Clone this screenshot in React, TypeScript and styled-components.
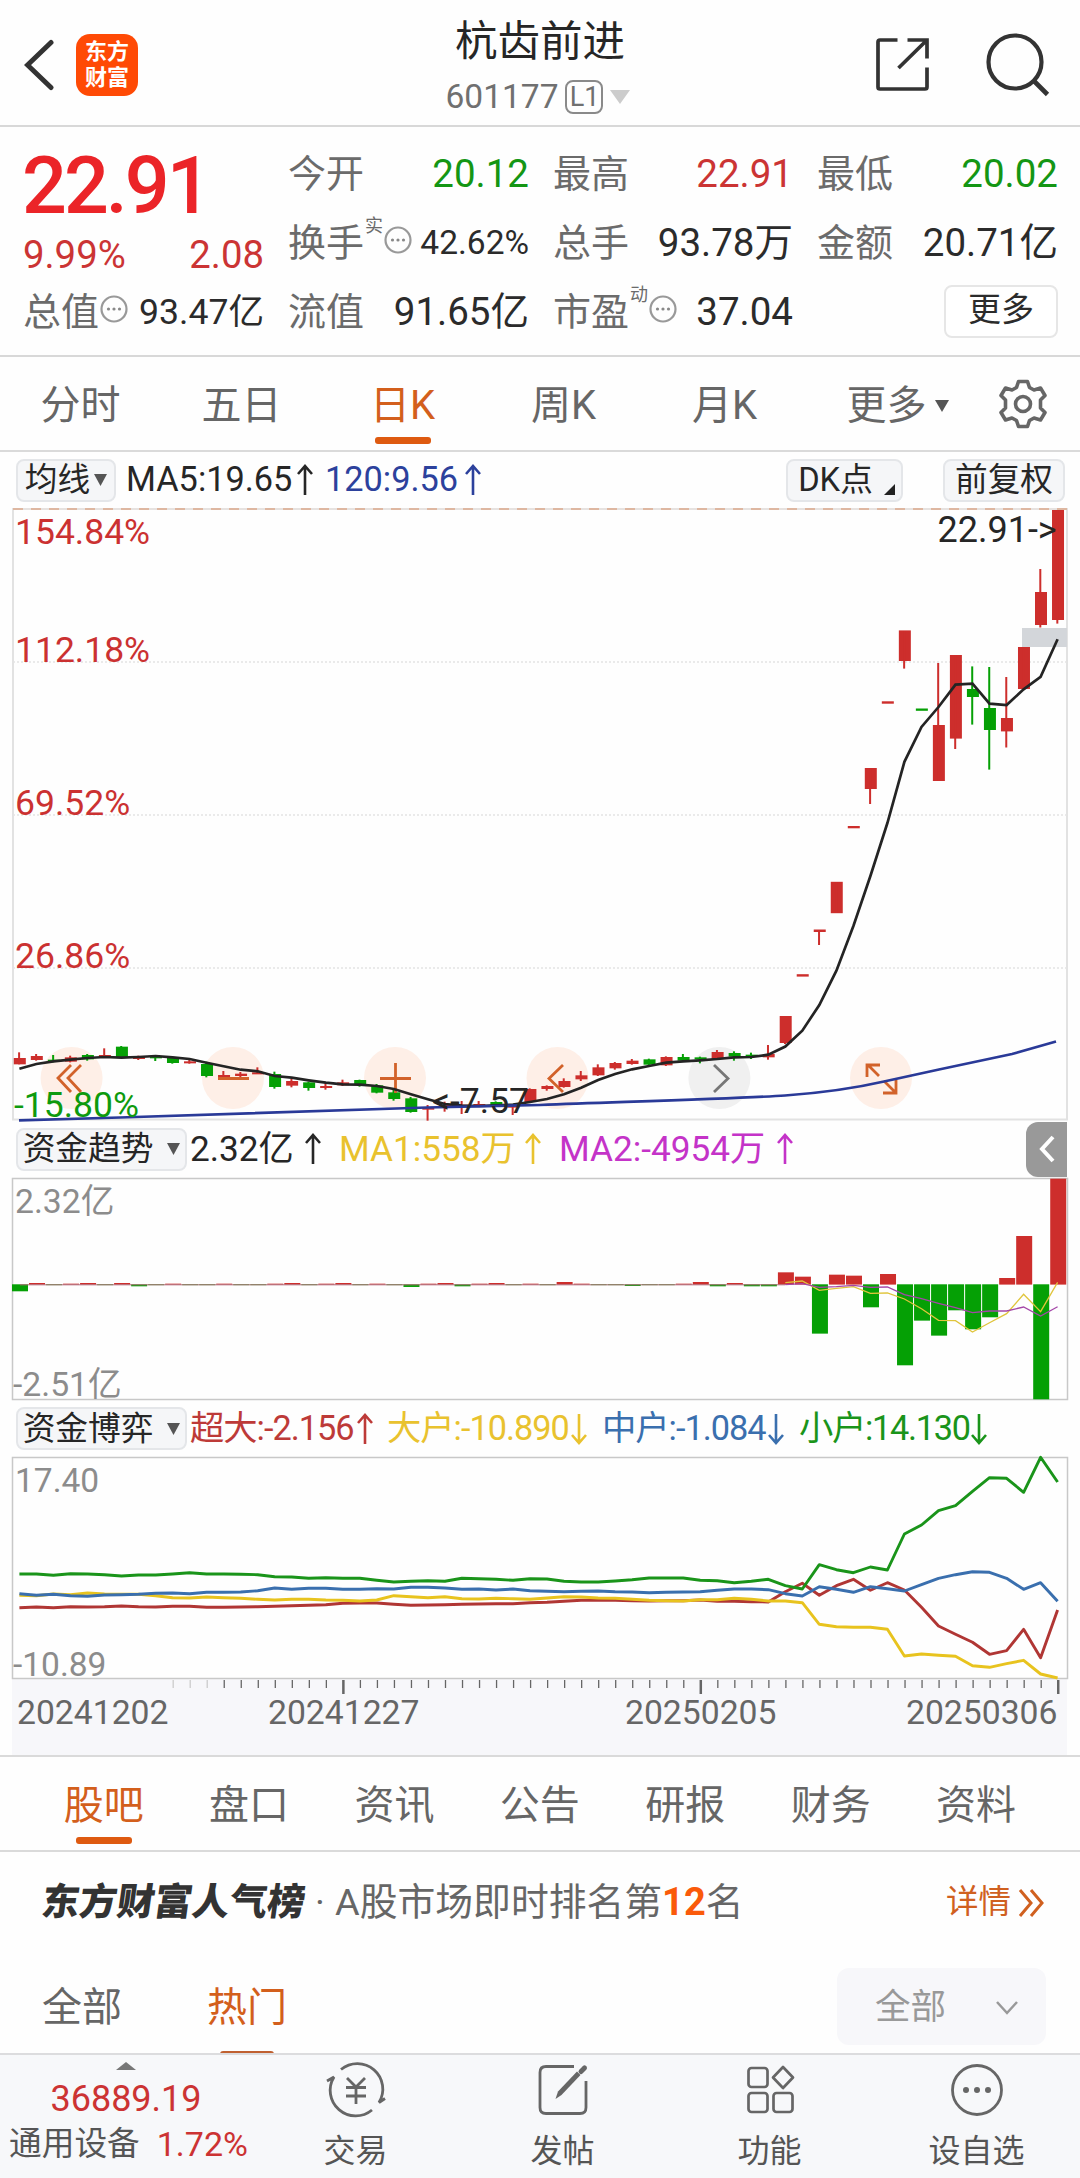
import React from 'react';
import styled, { createGlobalStyle } from 'styled-components';

const Global = createGlobalStyle`
  *{box-sizing:border-box}
  body{margin:0;background:#fff}
`;

const PITCH = 17.02;
const cx = (i: number) => 20 + PITCH * i;

type Candle = [number, number, number, number, number];
const R = 1;
const G = 0;
const low = (v: number) => 1000 + v / 3;
const lowCandles: Candle[] = [
  [R, 174, 193, 157, 193], [R, 168, 180, 162, 182], [G, 179, 182, 165, 187], [R, 172, 185, 167, 187],
  [G, 165, 178, 162, 182], [R, 165, 172, 145, 172], [G, 140, 171, 138, 171], [R, 171, 174, 167, 180],
  [G, 169, 172, 165, 183], [G, 173, 189, 172, 191], [R, 184, 187, 178, 191], [G, 192, 228, 185, 232],
  [R, 225, 229, 213, 235], [R, 221, 228, 216, 234], [R, 217, 221, 202, 222], [G, 222, 261, 215, 266],
  [R, 243, 257, 237, 262], [G, 247, 264, 245, 272], [R, 258, 261, 250, 269], [R, 247, 256, 239, 258],
  [G, 240, 255, 239, 260], [G, 256, 278, 252, 280], [G, 277, 297, 270, 302], [G, 295, 336, 291, 338],
  [R, 323, 326, 315, 362], [R, 315, 321, 305, 335], [R, 314, 320, 303, 342], [R, 312, 315, 303, 318],
  [G, 306, 318, 304, 320], [R, 317, 320, 314, 345], [R, 267, 306, 265, 308], [R, 258, 267, 256, 272],
  [R, 243, 261, 235, 263], [R, 226, 238, 213, 243], [R, 202, 226, 193, 228], [R, 189, 205, 186, 209],
  [R, 182, 192, 177, 194], [G, 178, 194, 176, 198], [R, 171, 196, 169, 198], [G, 171, 182, 162, 186],
  [G, 172, 178, 170, 190], [R, 156, 177, 150, 180], [G, 159, 170, 154, 182], [G, 164, 167, 158, 177],
  [R, 162, 172, 135, 179],
].map(([c, a, b, h, l]) => [c, low(a), low(b), low(h), low(l)] as Candle);
const candles: Candle[] = [
  ...lowCandles,
  [R, 1016, 1043, 1016, 1044], [R, 974.2, 976.6, 975, 976], [R, 929.5, 932, 930, 945],
  [R, 881.8, 913.2, 882, 913], [R, 826, 828.3, 827, 828], [R, 768, 789, 768, 804],
  [R, 701.3, 703.7, 702, 703], [R, 630.4, 661, 631, 668.6], [G, 708.5, 710.8, 709, 710],
  [R, 725, 781, 663, 781], [R, 655, 738.6, 655, 749], [G, 689, 697, 666.4, 724.6],
  [G, 708, 730, 667, 769.6], [R, 718, 731.4, 677, 747.5], [R, 647, 689, 647, 689],
  [R, 592, 625, 569, 627.5], [R, 510, 620, 510, 623.6],
];
const ma5 = [
  ...[206, 192, 184, 179, 174, 171, 173, 171, 168, 172, 177, 188, 199, 209, 214, 228, 233, 241, 248, 253, 254, 258,
    267, 283, 298, 312, 317, 318, 316, 314, 306, 297, 283, 263, 240, 222, 208, 198, 188, 184, 181, 177, 172, 171,
    164].map(low),
  1046.5, 1030.7, 1005, 970.7, 926, 876, 823, 761.8, 727, 707, 684.6, 683.6, 703.6, 705, 689.3, 676.8, 639.3,
];

const flow = (v: number) => 1170 + v / 3;
const flowSmall: Record<number, number> = {
  0: 363, 1: 339, 4: 339, 6: 339, 7: 348, 16: 339, 19: 339, 23: 350, 25: 339, 26: 348, 28: 339, 32: 336, 36: 347, 40: 336,
  41: 348, 42: 339, 43: 348, 44: 348,
};
const flowTail = [307, 320, 490, 314, 317, 411, 312, 585, 451, 496, 420, 477, 441, 324, 198, 687, 26];
const flowBars = Array.from({ length: 62 }, (_, i) => (i >= 45 ? flowTail[i - 45] : flowSmall[i] ?? (i % 3 ? 344.5 : 341)));
const flowYellow = [338, 333, 361, 355, 350, 370, 369, 387, 416, 451, 452, 486, 458, 431, 373, 425, 337];
const flowMagenta = [344, 341, 352, 350, 346, 352, 351, 374, 386, 400, 413, 428, 423, 423, 411, 438, 410];

const game = {
  green: [402, 402, 406, 401, 402, 404, 408, 405, 405, 402, 398, 402, 402, 403, 404, 410, 411, 415, 413, 415, 415, 421,
    426, 424, 422, 424, 415, 416, 418, 421, 416, 417, 424, 426, 426, 423, 419, 414, 414, 414, 421, 422, 428, 424, 418,
    437, 447, 374, 389, 398, 381, 390, 282, 255, 212, 197, 154, 113, 115, 157, 52, 126],
  blue: [461, 466, 463, 467, 469, 465, 464, 463, 460, 459, 461, 457, 457, 456, 452, 444, 448, 445, 445, 448, 448, 446,
    447, 442, 442, 444, 448, 447, 450, 447, 452, 454, 455, 454, 453, 455, 456, 458, 457, 456, 455, 451, 447, 447, 449,
    461, 468, 440, 448, 457, 440, 446, 453, 434, 415, 404, 395, 397, 415, 448, 428, 484],
  yellow: [466, 467, 462, 464, 459, 462, 463, 463, 467, 473, 474, 471, 473, 475, 478, 480, 478, 478, 480, 481, 483, 480,
    467, 470, 473, 470, 476, 477, 475, 476, 478, 474, 470, 471, 474, 475, 478, 481, 482, 483, 479, 479, 475, 478, 483,
    483, 488, 553, 560, 562, 562, 568, 648, 642, 646, 649, 677, 682, 671, 661, 702, 714],
  red: [503, 501, 503, 500, 501, 500, 498, 500, 501, 499, 499, 502, 502, 501, 500, 499, 497, 496, 494, 490, 489, 489,
    493, 496, 495, 494, 493, 492, 491, 491, 488, 487, 484, 481, 481, 481, 482, 483, 482, 482, 480, 484, 484, 485, 486,
    455, 430, 466, 437, 418, 451, 428, 450, 502, 558, 583, 607, 643, 632, 568, 653, 510],
};
const pts = (v: number[], f: (n: number) => number, from = 0) =>
  v.map((y, i) => `${(cx(i + from) - 0.6).toFixed(1)},${f(y).toFixed(1)}`).join(' ');

const Page = styled.div`
  width: 1080px; height: 2178px; overflow: hidden; display: flex; flex-direction: column;
  background: #fefefe; color: #262626; font-family: Roboto, "Noto Sans CJK SC", sans-serif; font-weight: 400;
  white-space: nowrap; line-height: 1.2;
`;
const Header = styled.header`
  height: 127px; flex: none; border-bottom: 2px solid #d8d8d8; display: grid; grid-template-columns: 300px 1fr 300px;
`;
const HeadLeft = styled.div`display: flex; align-items: center; padding: 5px 0 0 24px; gap: 21px;`;
const Logo = styled.div`
  width: 62px; height: 62px; border-radius: 14px; background: #ff4a05; color: #fff; font-size: 22px; line-height: 26px;
  font-weight: 700; display: flex; flex-direction: column; align-items: center; justify-content: center;
`;
const HeadMid = styled.div`display: flex; flex-direction: column; align-items: center; padding-top: 15px;`;
const Title = styled.div`font-size: 42.5px; line-height: 54px;`;
const CodeLine = styled.div`
  display: flex; align-items: center; height: 34px; margin-top: 11px; font-size: 33.5px; color: #707070; gap: 7px;
  margin-left: -4px;
`;
const Level = styled.span`
  width: 38px; height: 34px; border: 2px solid #8a8a8a; border-radius: 8px; font-size: 27px; line-height: 31px; text-align: center;
`;
const HeadRight = styled.div`display: flex; align-items: center; justify-content: flex-end; padding: 4px 30px 0 0; gap: 57px;`;

const Quote = styled.section`
  height: 230px; flex: none; border-bottom: 2px solid #d8d8d8; padding: 13px 22px 0 23px; display: grid;
  grid-template-columns: 241px 241px 240px 241px; column-gap: 24px; grid-template-rows: 69px 69px 69px;
`;
const PriceBox = styled.div`grid-row: 1 / span 2; display: flex; flex-direction: column;`;
const Price = styled.div`font-size: 79px; line-height: 90px; font-weight: 500; color: #eb2428; letter-spacing: -3px; padding-top: 1px; margin-left: -1px;`;
const Change = styled.div`
  display: flex; justify-content: space-between; font-size: 38.3px; line-height: 44px; color: #cb3434; margin-top: 2px;
`;
const Cell = styled.div<{ $color?: string; $size?: number }>`
  display: flex; align-items: center; justify-content: space-between; color: ${(p) => p.$color || '#2b2b2b'};
  font-size: ${(p) => p.$size || 38.5}px;
`;
const Label = styled.span`font-size: 38px; color: #6b6b6b; display: flex; align-items: center;`;
const Sup = styled.sup`font-size: 18px; line-height: 18px; align-self: flex-start; margin: -4px 0 0 1px;`;
const InfoIcon = styled.svg`margin: -7px 0 0 1px; display: block;`;
const MoreBtn = styled.button`
  justify-self: end; align-self: center; width: 114px; height: 53px; border: 2px solid #e6e6e6; border-radius: 8px;
  background: #fff; color: #2b2b2b; font: inherit; font-size: 33px; line-height: 44px; padding: 0 0 3px; margin-bottom: 2px;
`;

const Tabs = styled.nav<{ $pad: number; $top?: boolean }>`
  height: ${(p) => (p.$top ? 97 : 95)}px; flex: none; border-bottom: 2px solid #dadada; display: flex;
  padding: 0 ${(p) => p.$pad}px; border-top: ${(p) => (p.$top ? '2px solid #dadada' : '0')};
`;
const Tab = styled.div<{ $on?: boolean; $w: number }>`
  width: ${(p) => p.$w}px; height: 93px; display: flex; flex-direction: column; align-items: center; font-size: 40px;
  line-height: 58px; padding-top: 20px; color: ${(p) => (p.$on ? '#d35f1c' : '#666')};
  &::after { content: ''; display: block; width: 56px; height: 7px; border-radius: 3px; margin-top: 2px;
    background: ${(p) => (p.$on ? '#de5a10' : 'transparent')}; }
`;
const TabInner = styled.span`display: flex; align-items: center; gap: 8px;`;
const GearTab = styled.div`flex: 1; display: flex; align-items: center; justify-content: flex-end; padding-right: 33px;`;

const Legend = styled.div<{ $h: number; $r?: number }>`
  height: ${(p) => p.$h}px; flex: none; display: flex; align-items: center; padding: 0 ${(p) => p.$r || 13}px 0 16px; font-size: 34.3px;
`;
const Chip = styled.span<{ $w: number; $m?: number; $gap?: number }>`
  width: ${(p) => p.$w}px; height: 43px; border: 2px solid #e4e6e9; border-radius: 8px; background: #f5f6f8;
  display: flex; align-items: center; justify-content: center; gap: ${(p) => p.$gap || 4}px; font-size: 32.7px;
  line-height: 40px; flex: none; margin-left: ${(p) => p.$m || 0}px;
`;
const Corner = styled.svg`align-self: flex-end; margin: 0 -4px 5px 0;`;
const Val = styled.span<{ $c?: string; $w: number; $m?: number; $sp?: number; $s?: number }>`
  width: ${(p) => p.$w}px; flex: none; margin-left: ${(p) => p.$m || 0}px; color: ${(p) => p.$c || '#262626'};
  letter-spacing: ${(p) => p.$sp || 0}px; display: flex; align-items: center; justify-content: space-between;
  font-size: ${(p) => p.$s || 34.3}px;
`;
const ArrowIcon = styled.svg`flex: none; display: block;`;
const Push = styled.span`flex: 1;`;
const Fold = styled.span`
  width: 41px; height: 55px; background: #999; border-radius: 12px 0 0 12px; display: flex; align-items: center;
  justify-content: center;
`;
const Plot = styled.div<{ $h: number }>`height: ${(p) => p.$h}px; flex: none; position: relative;`;
const Draw = styled.svg`display: block; width: 1080px; height: 100%; overflow: visible;`;
const Mark = styled.span<{ $x: number; $y: number; $c: string; $s?: number }>`
  position: absolute; left: ${(p) => p.$x}px; top: ${(p) => p.$y - 20}px; line-height: 40px; color: ${(p) => p.$c};
  font-size: ${(p) => p.$s || 35.5}px;
`;
const Axis = styled.div`
  height: 76px; flex: none; margin: 0 13px 0 12px; background: #f7f7fa;
`;
const TickRow = styled.svg`display: block; width: 1055px; height: 18px;`;
const Dates = styled.div`
  display: grid; grid-template-columns: 251px 357px 281px 155px; padding-left: 5px; font-size: 33.7px; line-height: 31px;
  color: #666;
`;
const Rank = styled.div`height: 101px; flex: none; display: flex; align-items: center; padding: 0 35px 0 42px; font-size: 37.8px; color: #666;`;
const Brand = styled.b`font-size: 37.6px; font-weight: 900; color: #333; transform: skewX(-8deg);`;
const Dot = styled.span`width: 30px; text-align: center;`;
const Hot = styled.b`color: #fa5a0a; font-size: 38px;`;
const More = styled.span`margin-left: auto; font-size: 32.5px; color: #d0601f; display: flex; align-items: center; gap: 7px;`;
const Filter = styled.div`height: 100px; flex: none; display: flex; padding: 0 34px 0 42px; font-size: 40px; overflow: hidden;`;
const FTab = styled.div<{ $on?: boolean }>`
  width: 80px; margin-right: 85px; padding-top: 26px; line-height: 58px; color: ${(p) => (p.$on ? '#d35f1c' : '#666')};
  &::after { content: ''; display: block; width: 54px; height: 7px; border-radius: 3px; margin: 14px auto 0;
    background: ${(p) => (p.$on ? '#c06030' : 'transparent')}; }
`;
const Select = styled.div`
  margin: 15px 0 0 auto; width: 209px; height: 77px; border-radius: 12px; background: #f7f7fa; color: #999;
  font-size: 35.5px; display: flex; align-items: center; justify-content: space-between; padding: 2px 28px 0 38px;
`;
const Bottom = styled.footer`
  flex: 1; background: #f7f8fa; border-top: 2px solid #dcdcde; display: grid; grid-template-columns: 252px 207px 207px 207px 207px;
`;
const Index = styled.div`
  display: flex; flex-direction: column; align-items: center; color: #cc3333; font-size: 36px; padding-top: 7px;
`;
const IndexValue = styled.div`line-height: 40px; margin-top: 9px;`;
const IndexName = styled.div`
  display: flex; align-items: center; line-height: 44px; font-size: 34px; gap: 17px; margin-top: 3px; padding-left: 5px;
`;
const IndexLabel = styled.span`font-size: 32.7px; color: #555;`;
const Item = styled.div`
  display: flex; flex-direction: column; align-items: center; padding-top: 7px; font-size: 32px; line-height: 40px;
  color: #555; gap: 13px;
`;

const Arrow = ({ up = true }: { up?: boolean }) => (
  <ArrowIcon width="18" height="32" viewBox="0 0 18 32" fill="none" stroke="currentColor" strokeWidth="2.600">
    <path d={up ? 'M9 31V2M2 10L9 2L16 10' : 'M9 1V30M2 22L9 30L16 22'} />
  </ArrowIcon>
);
const Tri = ({ w = 13, h = 12, c = '#555', up = false }) => (
  <svg width={w} height={h} viewBox="0 0 10 10" preserveAspectRatio="none">
    <path d={up ? 'M0 10H10L5 0Z' : 'M0 0H10L5 10Z'} fill={c} />
  </svg>
);
const Info = () => (
  <InfoIcon width="28" height="28" viewBox="0 0 28 28">
    <circle cx="14" cy="14" r="12.500" fill="none" stroke="#999" strokeWidth="2.200" />
    <g fill="#888"><circle cx="8.500" cy="14" r="1.600" /><circle cx="14" cy="14" r="1.600" /><circle cx="19.500" cy="14" r="1.600" /></g>
  </InfoIcon>
);
const Gear = () => (
  <svg width="48" height="50" viewBox="-24 -25 48 50" fill="none" stroke="#666" strokeWidth="3.600" strokeLinejoin="round">
    <path d="M-4.500 -22.500H4.500L6.500 -16.500L11 -14L17.500 -16L22 -8.500L17.500 -4V4L22 8.500L17.500 16L11 14L6.500 16.500L4.500 22.500H-4.500L-6.500 16.500L-11 14L-17.500 16L-22 8.500L-17.500 4V-4L-22 -8.500L-17.500 -16L-11 -14L-6.500 -16.500Z" />
    <circle r="7.500" />
  </svg>
);

function MainChart() {
  const circles = [71.6, 233, 395, 557.5, 719.4, 881];
  return (
    <Plot $h={612}>
      <Draw viewBox="0 508 1080 612">
        <path d="M13 508V1119.500H1067V508" fill="none" stroke="#e2e2e2" strokeWidth="2" />
        <path d="M13 509H1067" stroke="#e6e2e0" strokeWidth="2" />
        <path d="M13 509H1067" stroke="#dba98c" strokeWidth="1.500" strokeDasharray="10 8" />
        {[662, 815, 968].map((y) => <path key={y} d={`M13 ${y}H1067`} stroke="#e4e4e4" strokeWidth="1.500" strokeDasharray="2 2" />)}
        {circles.map((x, i) => <circle key={x} cx={x} cy="1078" r="31" fill={i === 4 ? '#f0f0f0' : '#feefe7'} />)}
        <rect x="1022" y="628" width="45" height="19" fill="#d3d6da" />
        {candles.map(([c, a, b, h, l], i) => (
          <g key={i} fill={c ? '#cd2e2c' : '#05a005'}>
            <rect x={cx(i) - 6.2} y={a} width="12" height={Math.max(b - a, 2)} />
            <rect x={cx(i) - 1.9} y={h} width="2" height={l - h} />
          </g>
        ))}
        <g fill="none" strokeWidth="2.800">
          <path d="M80 1065L67 1078L80 1092M70 1065L57 1078L70 1092" transform="translate(1 0)" stroke="#d2622a" />
          <path d="M218 1078.500H249M380 1078.500H411M395.500 1063V1093" stroke="#d2622a" />
          <path d="M563 1065L549 1078.500L563 1092" stroke="#d2622a" />
          <path d="M714 1065L728 1078.500L714 1092" stroke="#777" />
          <path d="M879 1076L868 1065M867 1077V1065H880M884 1081L895 1092M896 1080V1093H883" stroke="#d2622a" />
        </g>
        <polyline points={pts(ma5, (n) => n)} fill="none" stroke="#242424" strokeWidth="2.700" />
        <path d="M19 1120.300L120 1117.500L427 1107.500L540 1105C650 1101 750 1098 785 1095.500S860 1087 884 1081.500L939 1069.500L1012 1054L1056 1041.500" fill="none" stroke="#2a3a98" strokeWidth="2.700" />
      </Draw>
      <Mark $x={15} $y={24} $c="#cb3131">154.84%</Mark>
      <Mark $x={15} $y={142} $c="#cb3131">112.18%</Mark>
      <Mark $x={15} $y={295} $c="#cb3131">69.52%</Mark>
      <Mark $x={15} $y={448} $c="#cb3131">26.86%</Mark>
      <Mark $x={14} $y={597} $c="#0e9a0e">-15.80%</Mark>
      <Mark $x={937.5} $y={22} $c="#262626" $s={36}>22.91-&gt;</Mark>
      <Mark $x={432} $y={593} $c="#262626" $s={35.5}>&lt;-7.57</Mark>
    </Plot>
  );
}

function FlowChart() {
  return (
    <Plot $h={222}>
      <Draw viewBox="0 1178 1080 222">
        <rect x="12.500" y="1178.500" width="1055" height="221" fill="none" stroke="#c8c8c8" strokeWidth="1.500" />
        {flowBars.map((v, i) => {
          const y = flow(v);
          return <rect key={i} x={cx(i) - 8} width="16" y={Math.min(y, 1284.3)} height={Math.abs(y - 1284.3) + 0.3} fill={v < 343 ? '#cd2e2c' : '#05a005'} />;
        })}
        <path d="M20 1284.800H785" stroke="#b06a78" strokeWidth="1" />
        <polyline points={pts(flowYellow, flow, 45)} fill="none" stroke="#e0c53c" strokeWidth="1.300" />
        <polyline points={pts(flowMagenta, flow, 45)} fill="none" stroke="#a446a8" strokeWidth="1.300" />
      </Draw>
      <Mark $x={15} $y={24} $c="#8c8c8c" $s={33.7}>2.32亿</Mark>
      <Mark $x={13} $y={207} $c="#8c8c8c" $s={33.7}>-2.51亿</Mark>
    </Plot>
  );
}

function GameChart() {
  const f = (v: number) => 1440 + v / 3;
  return (
    <Plot $h={222}>
      <Draw viewBox="0 1457 1080 222">
        <rect x="12.500" y="1457.500" width="1055" height="221" fill="none" stroke="#c8c8c8" strokeWidth="1.500" />
        <g fill="none" strokeWidth="2.900" strokeLinejoin="round">
          <polyline points={pts(game.red, f)} stroke="#b03634" />
          <polyline points={pts(game.yellow, f)} stroke="#e8c31e" />
          <polyline points={pts(game.blue, f)} stroke="#3a6fae" />
          <polyline points={pts(game.green, f)} stroke="#1a941a" />
        </g>
      </Draw>
      <Mark $x={15} $y={24} $c="#8c8c8c" $s={33.5}>17.40</Mark>
      <Mark $x={13} $y={208} $c="#8c8c8c" $s={33.5}>-10.89</Mark>
    </Plot>
  );
}

export default function App() {
  return (
    <Page>
      <Global />
      <Header>
        <HeadLeft>
          <svg width="31" height="52" viewBox="0 0 31 52" fill="none" stroke="#333" strokeWidth="5" strokeLinecap="round"><path d="M27 3.500L3.500 26L27 48.500" /></svg>
          <Logo><span>东方</span><span>财富</span></Logo>
        </HeadLeft>
        <HeadMid>
          <Title>杭齿前进</Title>
          <CodeLine>601177<Level>L1</Level><Tri w={20} h={14} c="#ccc" /></CodeLine>
        </HeadMid>
        <HeadRight>
          <svg width="53" height="53" viewBox="0 0 53 53" fill="none" stroke="#333" strokeWidth="3.700">
            <path d="M21.500 2H4Q2 2 2 4V49Q2 51 4 51H49Q51 51 51 49V29.500M31.500 2H51V20.500M50.500 2.500L22.500 30" />
          </svg>
          <svg width="64" height="64" viewBox="0 0 64 64" fill="none" stroke="#333" strokeWidth="4.200">
            <circle cx="29" cy="29" r="26.500" /><path d="M47 47L61.500 61.500" strokeWidth="4.600" />
          </svg>
        </HeadRight>
      </Header>

      <Quote>
        <PriceBox><Price>22.91</Price><Change><span>9.99%</span><span>2.08</span></Change></PriceBox>
        <Cell $color="#149614"><Label>今开</Label>20.12</Cell>
        <Cell $color="#cb3434"><Label>最高</Label>22.91</Cell>
        <Cell $color="#149614"><Label>最低</Label>20.02</Cell>
        <Cell $size={33.5}><Label>换手<Sup>实</Sup><Info /></Label>42.62%</Cell>
        <Cell><Label>总手</Label>93.78万</Cell>
        <Cell><Label>金额</Label>20.71亿</Cell>
        <Cell $size={35.6}><Label>总值<Info /></Label>93.47亿</Cell>
        <Cell><Label>流值</Label>91.65亿</Cell>
        <Cell><Label>市盈<Sup>动</Sup><Info /></Label>37.04</Cell>
        <MoreBtn>更多</MoreBtn>
      </Quote>

      <Tabs $pad={0}>
        <Tab $w={161}>分时</Tab>
        <Tab $w={161}>五日</Tab>
        <Tab $w={161} $on>日K</Tab>
        <Tab $w={161}>周K</Tab>
        <Tab $w={161}>月K</Tab>
        <Tab $w={185}><TabInner>更多<Tri w={14} /></TabInner></Tab>
        <GearTab><Gear /></GearTab>
      </Tabs>

      <Legend $h={56} $r={15}>
        <Chip $w={100}>均线<Tri /></Chip>
        <Val $w={188} $m={10}>MA5:19.65<Arrow /></Val>
        <Val $w={157} $m={11} $c="#2c419c">120:9.56<Arrow /></Val>
        <Push />
        <Chip $w={117} $gap={11}>DK点<Corner width="11" height="11"><path d="M0 11H11V0Z" fill="#222" /></Corner></Chip>
        <Chip $w={122} $m={40}>前复权</Chip>
      </Legend>
      <MainChart />
      <Legend $h={58}>
        <Chip $w={171} $gap={14}>资金趋势<Tri /></Chip>
        <Val $w={132} $m={3} $s={35.2}>2.32亿<Arrow /></Val>
        <Val $w={203} $m={17} $c="#e9c22e" $s={35.2}>MA1:558万<Arrow /></Val>
        <Val $w={235} $m={17} $c="#c433c8" $s={35.2}>MA2:-4954万<Arrow /></Val>
        <Push />
        <Fold><svg width="16" height="28" viewBox="0 0 16 28" fill="none" stroke="#fff" strokeWidth="4"><path d="M14 2L3 14L14 26" /></svg></Fold>
      </Legend>
      <FlowChart />
      <Legend $h={57}>
        <Chip $w={171} $gap={14}>资金博弈<Tri /></Chip>
        <Val $w={184} $m={3} $c="#bd3a38" $sp={-1}>超大:-2.156<Arrow /></Val>
        <Val $w={201} $m={13} $c="#e9c22e" $sp={-1}>大户:-10.890<Arrow up={false} /></Val>
        <Val $w={183} $m={14} $c="#3a6fae" $sp={-1}>中户:-1.084<Arrow up={false} /></Val>
        <Val $w={188} $m={14} $c="#1a941a" $sp={-1.3}>小户:14.130<Arrow up={false} /></Val>
      </Legend>
      <GameChart />
      <Axis>
        <TickRow viewBox="12 1679 1055 18">
          {Array.from({ length: 53 }, (_, k) => k + 9).map((i) => {
            const major = i === 19 || i === 40 || i === 61;
            return <path key={i} d={`M${cx(i)} 1680V${major ? 1694 : 1688}`} stroke={i < 12 ? '#ccc' : '#666'} strokeWidth={major ? 2.5 : 1.3} />;
          })}
        </TickRow>
        <Dates><span>20241202</span><span>20241227</span><span>20250205</span><span>20250306</span></Dates>
      </Axis>

      <Tabs $pad={31} $top>
        {['股吧', '盘口', '资讯', '公告', '研报', '财务', '资料'].map((t, i) => <Tab key={t} $w={145.4} $on={i === 0}>{t}</Tab>)}
      </Tabs>
      <Rank>
        <Brand>东方财富人气榜</Brand><Dot>·</Dot>A股市场即时排名第<Hot>12</Hot>名
        <More>详情<svg width="27" height="30" viewBox="0 0 27 30" fill="none" stroke="currentColor" strokeWidth="3"><path d="M2 2L13 15L2 28M13 2L24 15L13 28" /></svg></More>
      </Rank>
      <Filter>
        <FTab>全部</FTab><FTab $on>热门</FTab>
        <Select>全部<svg width="22" height="14" viewBox="0 0 22 14" fill="none" stroke="#999" strokeWidth="2.500"><path d="M1 1L11 12L21 1" /></svg></Select>
      </Filter>
      <Bottom>
        <Index>
          <Tri w={20} h={8} c="#777" up />
          <IndexValue>36889.19</IndexValue>
          <IndexName><IndexLabel>通用设备</IndexLabel>1.72%</IndexName>
        </Index>
        <Item>
          <svg width="60" height="56" viewBox="-30 -28 60 56" fill="none" stroke="#666" strokeWidth="2.800">
            <path d="M-15 -20.500A25.500 25.500 0 0 1 23 12.500L29 8.500M16 20A25.500 25.500 0 0 1 -22 -13L-29 -9M-9 -12L0 -3L9 -12M0 -3V14M-10 -2.500H10M-10 6H10" />
          </svg>交易
        </Item>
        <Item>
          <svg width="56" height="56" viewBox="-28 -28 56 56" fill="none" stroke="#666" strokeWidth="2.800">
            <path d="M11 -23.500H-17Q-23 -23.500 -23 -17.500V17.500Q-23 23.500 -17 23.500H17Q23 23.500 23 17.500V-9" />
            <path d="M-7.500 9L-5 1.500L14 -18.500L17.500 -15L-1.500 5Z" fill="#666" stroke="none" /><path d="M18 -18.500L21.500 -22" strokeWidth="5" strokeLinecap="round" />
          </svg>发帖
        </Item>
        <Item>
          <svg width="56" height="56" viewBox="-28 -28 56 56" fill="none" stroke="#666" strokeWidth="2.700">
            <rect x="-21.500" y="-22" width="19" height="19" rx="3" /><rect x="-21.500" y="3" width="19" height="19" rx="3" /><rect x="3.500" y="3" width="19" height="19" rx="3" />
            <path d="M13 -23L23 -12.500L13 -2L3 -12.500Z" strokeLinejoin="round" />
          </svg>功能
        </Item>
        <Item>
          <svg width="56" height="56" viewBox="-28 -28 56 56" fill="none" stroke="#666" strokeWidth="2.800">
            <circle r="24.500" /><g fill="#666" stroke="none"><circle cx="-11" r="3" /><circle r="3" /><circle cx="11" r="3" /></g>
          </svg>设自选
        </Item>
      </Bottom>
    </Page>
  );
}
